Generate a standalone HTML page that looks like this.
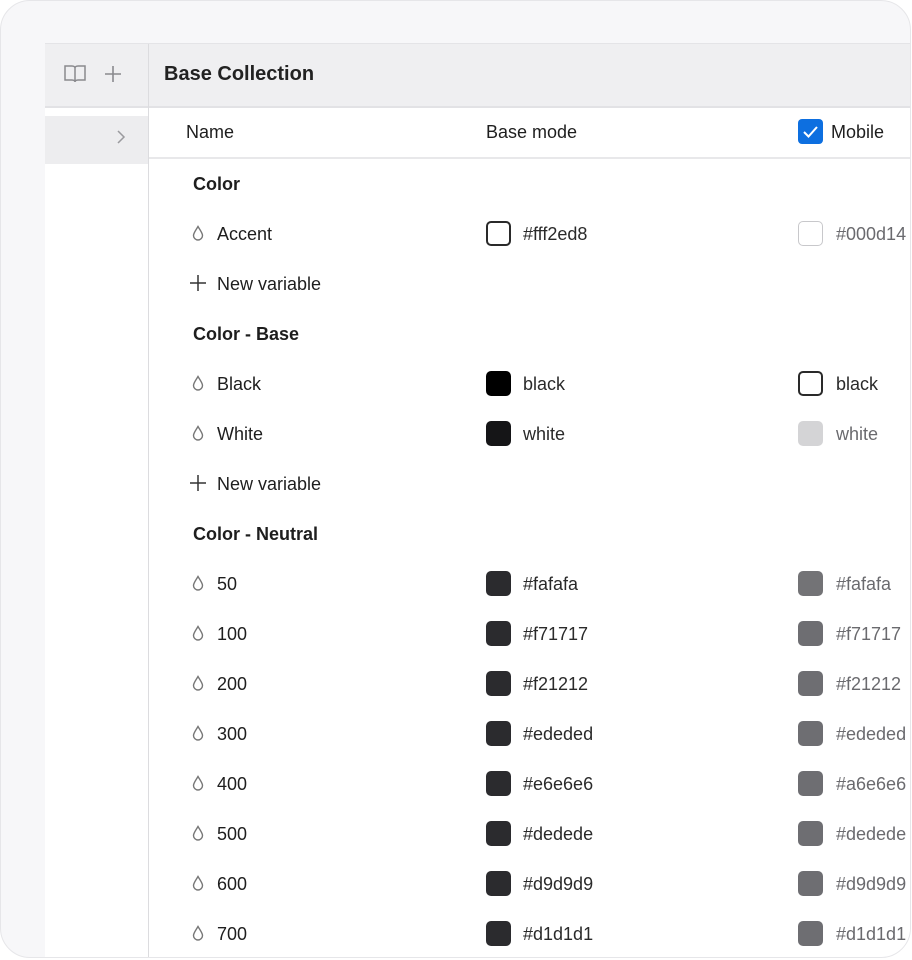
<!DOCTYPE html>
<html><head><style>
*{margin:0;padding:0;box-sizing:border-box}
body{width:912px;height:960px;background:#fff;font-family:"Liberation Sans",sans-serif;overflow:hidden;position:relative}
.frame{position:absolute;left:0;top:0;width:911px;height:958px;background:#f7f7f9;border:1px solid #e6e6e9;border-radius:30px;overflow:hidden}
.panel{position:absolute;left:44px;top:42px;width:900px;height:940px;background:#fff;border-top:1px solid #e4e4e7}
.hdr{position:absolute;left:0;top:0;width:900px;height:64px;background:#efeff1;border-bottom:2px solid #e2e2e5}
.side{position:absolute;left:0;top:0;width:104px;height:940px;border-right:1px solid #dcdcdf}
.sel{position:absolute;left:0;top:72px;width:103px;height:48px;background:#ededef}
.t{position:absolute;font-size:18px;color:#1e1e1e;white-space:nowrap;line-height:20px}
.g{color:#6a6a6e}
.sw{position:absolute;width:25px;height:25px;border-radius:5px}
.colh{position:absolute;left:104px;top:64px;width:800px;height:51px;border-bottom:2px solid #e8e8ea}
</style></head><body>
<div class="frame">
<div class="panel">
 <div class="hdr"></div>
 <div class="sel"></div>
 <div class="side"></div>
 <div class="colh"></div>
</div>
</div>
<svg style="position:absolute;left:63px;top:63px" width="24" height="22" viewBox="0 0 24 22" fill="none" stroke="#8a8a8e" stroke-width="1.5"><path d="M2 3h7c2 0 3 1 3 2v14c0-1-1-2-3-2H2z M22 3h-7c-2 0-3 1-3 2v14c0-1 1-2 3-2h7z"/></svg>
<svg style="position:absolute;left:103px;top:64px" width="20" height="20" viewBox="0 0 20 20" stroke="#8a8a8e" stroke-width="1.6"><path d="M10 2v16M2 10h16"/></svg>
<svg style="position:absolute;left:116px;top:129px" width="10" height="16" viewBox="0 0 10 16" fill="none" stroke="#9a9a9e" stroke-width="1.5"><path d="M2 2l6 6-6 6"/></svg>
<div class="t" style="left:164px;top:64px;font-size:20px;font-weight:bold;color:#222">Base Collection</div>
<div class="t" style="left:186px;top:122px">Name</div>
<div class="t" style="left:486px;top:122px">Base mode</div>
<div style="position:absolute;left:798px;top:119px;width:25px;height:25px;border-radius:4px;background:#0d6fe0"></div>
<svg style="position:absolute;left:798px;top:119px" width="25" height="25" viewBox="0 0 25 25" fill="none" stroke="#fff" stroke-width="2"><path d="M6 13l4.5 4.5L19 8"/></svg>
<div class="t" style="left:831px;top:122px">Mobile</div>

<div class="t" style="left:193px;top:174px;font-weight:bold">Color</div>
<div class="t" style="left:193px;top:324px;font-weight:bold">Color - Base</div>
<div class="t" style="left:193px;top:524px;font-weight:bold">Color - Neutral</div>
<svg style="position:absolute;left:189px;top:274px" width="18" height="18" viewBox="0 0 18 18" stroke="#333" stroke-width="1.5"><path d="M9 1v16M1 9h16"/></svg>
<div class="t" style="left:217px;top:274px">New variable</div>
<svg style="position:absolute;left:189px;top:474px" width="18" height="18" viewBox="0 0 18 18" stroke="#333" stroke-width="1.5"><path d="M9 1v16M1 9h16"/></svg>
<div class="t" style="left:217px;top:474px">New variable</div>

<div id="rows"></div>
<script>
var rows=[
[233,"Accent","#fff2ed8","w","#000d14","wl"],
[383,"Black","black","#000","black","wo"],
[433,"White","white","#151517","white","#d4d4d6"],
[583,"50","#fafafa","#2b2b2e","#fafafa","#737376"],
[633,"100","#f71717","#2b2b2e","#f71717","#6e6e72"],
[683,"200","#f21212","#2b2b2e","#f21212","#6e6e72"],
[733,"300","#ededed","#2b2b2e","#ededed","#6e6e72"],
[783,"400","#e6e6e6","#2b2b2e","#a6e6e6","#6e6e72"],
[833,"500","#dedede","#2b2b2e","#dedede","#6e6e72"],
[883,"600","#d9d9d9","#2b2b2e","#d9d9d9","#6e6e72"],
[933,"700","#d1d1d1","#2b2b2e","#d1d1d1","#6e6e72"]];
var h="";
rows.forEach(function(r){var y=r[0];
h+='<svg style="position:absolute;left:192px;top:'+(y-8)+'px" width="12" height="16" viewBox="0 0 12 16" fill="none" stroke="#777" stroke-width="1.4"><path d="M6 1.5C4 5 1.5 8 1.5 10.5a4.5 4.5 0 0 0 9 0C10.5 8 8 5 6 1.5z"/></svg>';
h+='<div class="t" style="left:217px;top:'+(y-9)+'px">'+r[1]+'</div>';
var s1=r[3]=="w"?'background:#fff;border:2px solid #2a2a2a':'background:'+r[3];
h+='<div class="sw" style="left:486px;top:'+(y-12)+'px;'+s1+'"></div>';
h+='<div class="t" style="left:523px;top:'+(y-9)+'px;color:#2a2a2a">'+r[2]+'</div>';
var s2=r[5]=="wl"?'background:#fff;border:1.5px solid #c8c8cb':r[5]=="wo"?'background:#fff;border:2px solid #2a2a2a':'background:'+r[5];
h+='<div class="sw" style="left:798px;top:'+(y-12)+'px;'+s2+'"></div>';
h+='<div class="t g" style="left:836px;top:'+(y-9)+'px;'+(r[5]=="wo"?'color:#2a2a2a':'')+'">'+r[4]+'</div>';
});
document.getElementById("rows").innerHTML=h;
</script>
</body></html>
